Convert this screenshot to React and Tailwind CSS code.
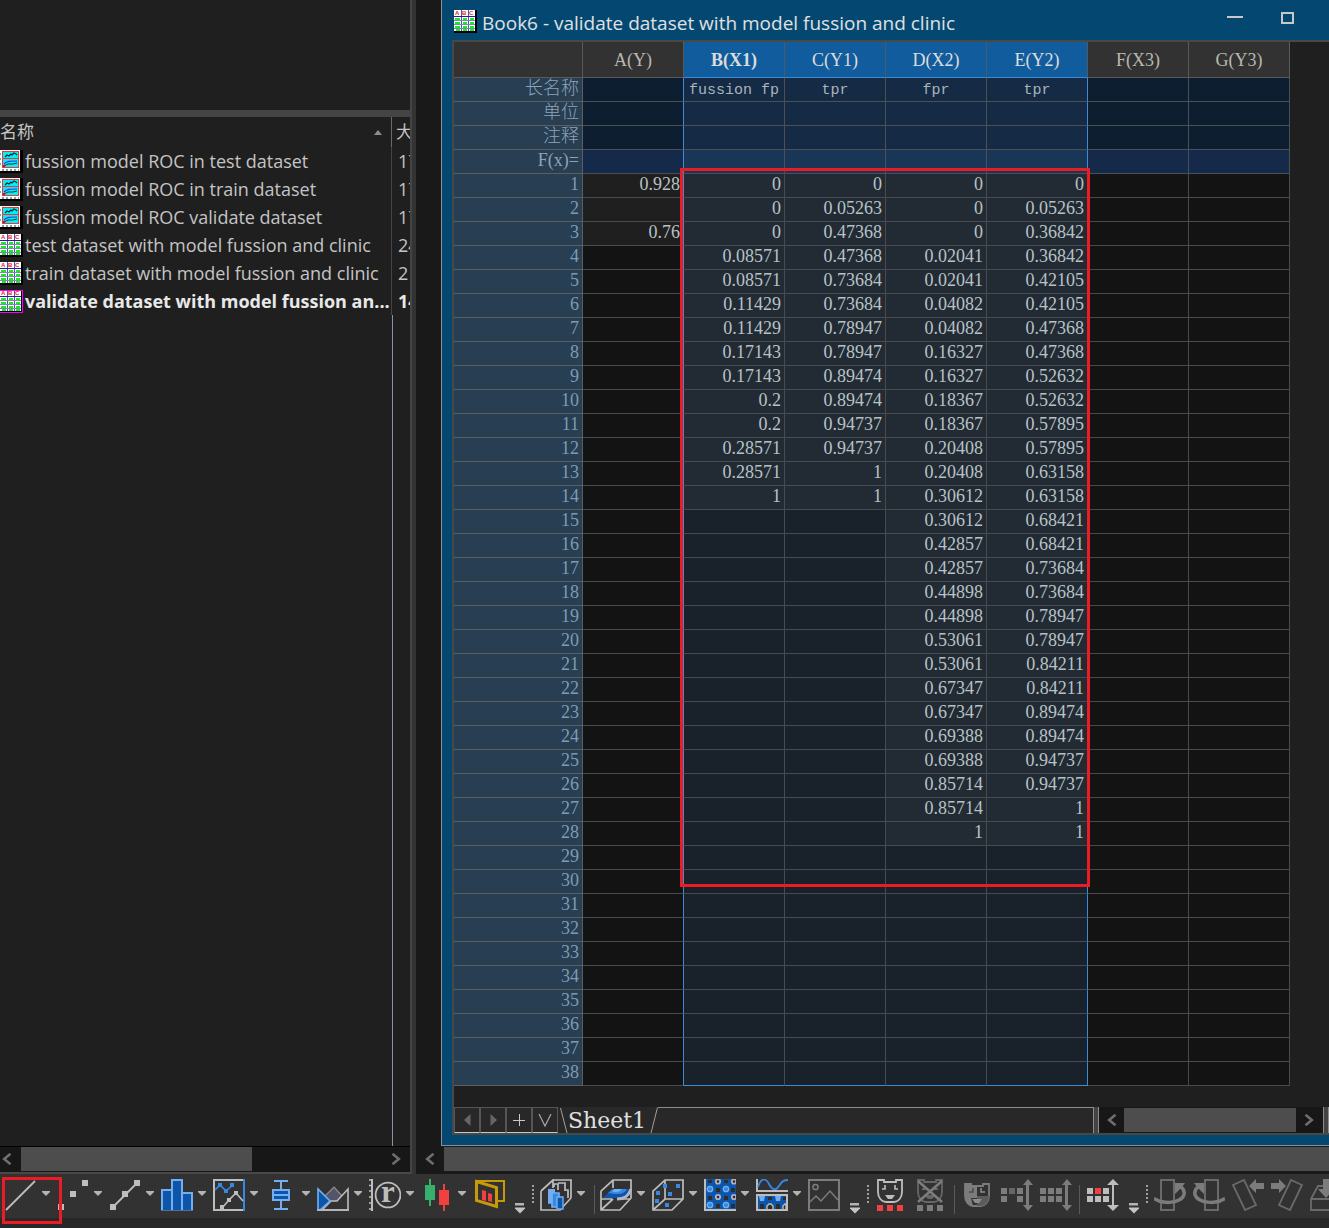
import React from "react";

const UI = "font-['Open_Sans','Noto_Sans_CJK_SC',sans-serif]";
const SHEET = "font-['Liberation_Serif','Noto_Sans_CJK_SC',serif]";

const files = [
  { kind: "graph", name: "fussion model ROC in test dataset", size: "17" },
  { kind: "graph", name: "fussion model ROC in train dataset", size: "17" },
  { kind: "graph", name: "fussion model ROC validate dataset", size: "17" },
  { kind: "book", name: "test dataset with model fussion and clinic", size: "24" },
  { kind: "book", name: "train dataset with model fussion and clinic", size: "2" },
  { kind: "book", name: "validate dataset with model fussion an...", size: "14", active: true },
];

const columns = ["A(Y)", "B(X1)", "C(Y1)", "D(X2)", "E(Y2)", "F(X3)", "G(Y3)"];
const labels = ["长名称", "单位", "注释", "F(x)="];
const longNames = ["", "fussion fp", "tpr", "fpr", "tpr", "", ""];

const data = {
  0: ["0.928", " ", "0.76"],
  1: ["0", "0", "0", "0.08571", "0.08571", "0.11429", "0.11429", "0.17143", "0.17143", "0.2", "0.2", "0.28571", "0.28571", "1"],
  2: ["0", "0.05263", "0.47368", "0.47368", "0.73684", "0.73684", "0.78947", "0.78947", "0.89474", "0.89474", "0.94737", "0.94737", "1", "1"],
  3: ["0", "0", "0", "0.02041", "0.02041", "0.04082", "0.04082", "0.16327", "0.16327", "0.18367", "0.18367", "0.20408", "0.20408", "0.30612", "0.30612", "0.42857", "0.42857", "0.44898", "0.44898", "0.53061", "0.53061", "0.67347", "0.67347", "0.69388", "0.69388", "0.85714", "0.85714", "1"],
  4: ["0", "0.05263", "0.36842", "0.36842", "0.42105", "0.42105", "0.47368", "0.47368", "0.52632", "0.52632", "0.57895", "0.57895", "0.63158", "0.63158", "0.68421", "0.68421", "0.73684", "0.73684", "0.78947", "0.78947", "0.84211", "0.84211", "0.89474", "0.89474", "0.94737", "0.94737", "1", "1"],
};
const rows = Array.from({ length: 38 }, (_, i) => i);
const isSelected = (c) => c >= 1 && c <= 4;

function BookIcon({ active }) {
  return (
    <svg width="23" height="23" viewBox="0 0 23 23" className="shrink-0" shapeRendering="crispEdges" aria-hidden="true">
      <rect width="23" height="23" fill="#000" />
      <rect width="21" height="21" fill="#fff" />
      <g fontFamily="Liberation Sans" fontWeight="700" fontSize="6" fill="#e8202c" shapeRendering="auto">
        <text x="1" y="5">A</text>
        <text x="8" y="5">B</text>
        <text x="15" y="5">C</text>
      </g>
      <path d="M7.5 0V21M14.5 0V21" stroke="#5a50b4" />
      <path d="M0 6.5H21M0 10.5H21M0 14.5H21M0 18.5H21" stroke="#7a8ab8" />
      <path d="M0 6.5H21" stroke="#2a1a9c" />
      <path d="M1 8.5H6M9 8.5H13M16 8.5H20M1 12.5H6M9 12.5H13M16 12.5H20M1 16.5H6M9 16.5H13M16 16.5H20M2 20H6M9 20H13M16 20H20" stroke="#20e820" strokeWidth="2" />
      {active && <path d="M0 .5H22.5V22.5H0" fill="none" stroke="#f0f" />}
    </svg>
  );
}

function GraphIcon() {
  return (
    <svg width="23" height="23" viewBox="0 0 23 23" className="shrink-0" shapeRendering="crispEdges" aria-hidden="true">
      <rect width="23" height="23" fill="#000" />
      <rect width="20" height="21" fill="#fff" />
      <path d="M2 19.5H19" stroke="#999" strokeWidth="2" strokeDasharray="2 2" />
      <path d="M.5 3V18" stroke="#999" strokeDasharray="2 3" />
      <rect x="2.5" y="1.5" width="16" height="16" fill="#00f0f8" stroke="#e83838" />
      <path d="M2 8.5H19" stroke="#e83838" />
      <g fill="none" shapeRendering="auto">
        <path d="M5 7l2-2 2 1 2-2 1 1 2-2 2 1 1 1" stroke="#102030" strokeWidth="1.2" />
        <path d="M4 14c3-3 6-3 13-3" stroke="#3030e0" strokeWidth="1.2" />
        <path d="M4 16l4-2h5l4-1" stroke="#103040" />
      </g>
      <rect x="3" y="15" width="2" height="2" fill="#e00020" />
    </svg>
  );
}

function Chevron({ dir }) {
  return (
    <svg width="10" height="12" viewBox="0 0 10 12" aria-hidden="true">
      <path d={dir === "left" ? "M8.5 .8L2.2 6l6.3 5.2" : "M1.5 .8L7.8 6l-6.3 5.2"} fill="none" stroke="#6e6e6e" strokeWidth="2.6" />
    </svg>
  );
}

const G = "#bdbdbd";
const D = "#7c7c7c";
const B = "#0d55a8";
const L = "#73aef0";
const K = "#3588e4";

const art = {
  line: <path d="M1 31L30 2" stroke={G} strokeWidth="1.8" />,
  scatter: <path d="M1 25h6v6h-6zM13 12h6v6h-6zM25 1h6v6h-6z" fill={G} />,
  lineSymbol: (
    <g fill={G}>
      <path d="M4 28L28 4" stroke={G} strokeWidth="1.8" />
      <path d="M1 25h6v6h-6zM13 12h6v6h-6zM25 1h6v6h-6z" />
    </g>
  ),
  column: (
    <g fill={B} stroke={L} strokeWidth="2">
      <path d="M1 31V11h10v20M21 31V14h10v17M11 31V1h10v30" />
      <path d="M0 32H32" strokeWidth="1" />
    </g>
  ),
  doubleY: (
    <g fill="none" strokeWidth="2">
      <path d="M31 1H1v30h30" stroke={G} />
      <path d="M31 0v32" stroke={K} />
      <path d="M2 11l5-5 6 6 7-6" stroke={K} strokeWidth="1.6" />
      <path d="M5 4h4v4H5zM11 10h4v4h-4zM17 4h4v4h-4z" fill={K} stroke="none" />
      <path d="M9 29l7-8 7-7 7 8" stroke={G} strokeWidth="1.6" />
      <path d="M7 26h4v4H7zM14 19h4v4h-4zM21 12h4v4h-4z" fill={G} stroke="none" />
    </g>
  ),
  box: (
    <g stroke={L} strokeWidth="2" fill={B}>
      <path d="M9 2h14M16 2v8M16 21v9M9 30h14" />
      <path d="M8 11h16v10H8zM8 16h16" />
    </g>
  ),
  area: (
    <g strokeWidth="1.6">
      <path d="M7 18l10-10 9 10-5 5H12z" fill="#55556a" stroke="#8d8d96" strokeWidth="1.2" />
      <path d="M5 31l9-9h6l11-12v21z" fill="#323232" stroke={G} />
      <path d="M1 10v21h2l10-9z" fill={B} stroke={L} />
      <path d="M0 31H32" stroke={G} />
    </g>
  ),
  polar: (
    <g fill="none" stroke={G}>
      <path d="M3 0v32" strokeWidth="2" />
      <path d="M0 1h3M0 6.5h3M0 12h3M0 18h3M0 24h3M0 30h3" strokeWidth="1.4" />
      <circle cx="19" cy="16" r="12.4" strokeWidth="1.8" />
      <text x="12" y="23" fontFamily="Liberation Serif" fontWeight="700" fontSize="31" fill={G} stroke="none">r</text>
    </g>
  ),
  candle: (
    <g>
      <path d="M4 6h10v15H4zM8 0h2v27H8z" fill="#36b06c" />
      <path d="M18 11h10v15H18zM22 5h2v27h-2z" fill="#f24040" />
    </g>
  ),
  template: (
    <g fill="none" stroke="#c89a08" strokeWidth="2">
      <path d="M3 2h28v20h-7" />
      <path d="M3.500 2.500l20 6v19l-20-6z" strokeWidth="3" />
      <path d="M9 11l4 1v10l-4-1zM15 14l4 1v8l-4-1z" fill="#f24040" stroke="none" />
    </g>
  ),
  bars3d: (
    <g fill="none" stroke={G} strokeWidth="1.7">
      <path d="M13 1h18v18M1 12L13 1v8M1 12v19h19l11-12" />
      <path d="M14 8V5h4v6M20 4h5v8M18 4h2M25 11h3v8" />
      <path d="M8 10h7v14l-7 1z" fill={L} stroke="none" />
      <path d="M12 14h7v14h-7z" fill={K} stroke={L} />
      <path d="M17 18h6v12h-6z" fill={B} stroke={L} strokeWidth="1.4" />
    </g>
  ),
  surface: (
    <g fill="none" stroke={G} strokeWidth="1.7">
      <path d="M13 1h18v18L20 31H1V12zM13 1v8M1 20h11M20 20h11M1 31l12-11" />
      <path d="M3 19l9-9h19c-2 7-6 9-12 9z" fill={B} stroke="none" />
      <path d="M8 14l5-4h14c-3 5-7 5-12 5z" fill={K} stroke="none" />
      <path d="M12 12l3-2h7c-2 3-5 3-8 3z" fill={L} stroke="none" />
      <path d="M31 10c-3 8-7 10-14 10" stroke="#b4b4c4" strokeWidth="3" />
    </g>
  ),
  scatter3d: (
    <g fill="none" stroke={G} strokeWidth="1.7">
      <path d="M13 1h18v19L20 31H1V12zM13 1v19M1 31l12-11h18" />
      <path d="M11 5h4v4h-4zM24 5h4v4h-4zM4 12h4v4H4zM16 13h4v4h-4zM3 20h4v4H3zM13 24h4v4h-4z" fill={K} stroke="none" />
    </g>
  ),
  contour: (
    <g>
      <path d="M0 0H32V32H0z" fill={B} />
      <path d="M1 0v31h31" stroke={G} strokeWidth="2" fill="none" />
      <path d="M4 1h4v3H4zM20 1h4v3h-4zM12 9h4v4h-4zM27 9h4v4h-4zM4 17h4v4H4zM20 17h4v4h-4zM12 25h4v4h-4zM27 25h4v4h-4z" fill="#2d2d2d" />
      <g fill={K} stroke={L} strokeWidth="1.3">
        <circle cx="6" cy="10" r="2.7" /><circle cx="22" cy="10" r="2.7" />
        <circle cx="6" cy="26" r="2.7" /><circle cx="22" cy="26" r="2.7" />
      </g>
      <g fill="#2d2d2d" stroke="#b0b0c0" strokeWidth="1.8">
        <circle cx="14" cy="2.5" r="2.2" /><circle cx="30" cy="2.5" r="2.2" />
        <circle cx="14" cy="18" r="2.2" /><circle cx="30" cy="18" r="2.2" />
      </g>
    </g>
  ),
  profile: (
    <g>
      <path d="M1 0v12h31" stroke={G} strokeWidth="2" fill="none" />
      <path d="M2 8C5-2 10-1 13 5s7 7 10 2 5-6 9-6" stroke={K} strokeWidth="1.8" fill="none" />
      <path d="M1 16h30v15H1z" fill={B} stroke={G} strokeWidth="2" />
      <path d="M12 18h4v3h-4zM27 18h3v3h-3zM4 25h4v5H4zM20 25h4v5h-4z" fill="#2d2d2d" />
      <path d="M3 17h6l-1 5H4zM19 17h6l-1 5h-4z" fill={L} />
      <path d="M11 30v-3l2-2h2l2 2v3M27 30v-3l2-2h1v5" fill="#2d2d2d" stroke={G} strokeWidth="1.4" />
    </g>
  ),
  image: (
    <g fill="none" stroke={D} strokeWidth="2">
      <path d="M1 1h30v30H1z" />
      <circle cx="7.5" cy="8" r="2.6" strokeWidth="1.5" />
      <path d="M2 23l6-6 5 5 9-10 8 9" strokeWidth="1.5" />
    </g>
  ),
  mask: (
    <g fill="none" stroke={G} strokeWidth="1.8">
      <path d="M3 1h6v2h12V1h6v12c0 6-4 10-8 10h-8c-4 0-8-4-8-10z" />
      <path d="M7 10h3V6M23 10h-3V6" strokeWidth="1.6" />
      <path d="M10 16h10l-3 4h-4z" fill={G} stroke="none" />
      <path d="M2 26h6v6H2zM12 26h6v6h-6zM22 26h6v6h-6z" fill="#f24040" stroke="none" />
    </g>
  ),
  unmask: (
    <g fill="none" stroke="#666" strokeWidth="1.8">
      <path d="M3 1h6v2h12V1h6v12c0 6-4 10-8 10h-8c-4 0-8-4-8-10z" />
      <path d="M7 10h4M19 10h4" />
      <path d="M9 16h12l-4 4h-4z" fill="#666" stroke="none" />
      <path d="M3 2l24 21M27 2L3 23" stroke={D} strokeWidth="2.6" />
      <path d="M2 26h6v6H2zM12 26h6v6h-6zM22 26h6v6h-6z" fill={D} stroke="none" />
    </g>
  ),
  maskSwap: (
    <g fill="none" stroke={D} strokeWidth="1.8">
      <path d="M3 5h6v2h12V5h6v12c0 6-4 10-8 10h-8c-4 0-8-4-8-10z" />
      <path d="M3 5h6v2h6v12H9l2 8c-4 0-8-4-8-10z" fill={D} stroke="none" />
      <path d="M15 17h12c0 6-4 10-8 10h-4z" fill="#5c5c5c" stroke="none" />
      <path d="M7 13h4V9" stroke="#4c4c4c" strokeWidth="1.5" />
      <path d="M23 13h-4V9" stroke="#8c8c8c" strokeWidth="1.5" />
      <path d="M10 20h10l-3 4h-4z" fill="#8c8c8c" stroke="none" />
    </g>
  ),
  moveA: (
    <g fill={D}>
      <path d="M0 9h6v6H0zM16 9h6v6h-6zM0 17h6v6H0zM16 17h6v6h-6z" />
      <path d="M8 9h6v6H8z" fill="#666" />
      <path d="M27 0l5 6h-4v20h4l-5 6-5-6h3V6h-3z" />
    </g>
  ),
  moveB: (
    <g fill={D}>
      <path d="M0 9h6v6H0zM8 9h6v6H8zM16 9h6v6h-6zM0 17h6v6H0zM8 17h6v6H8zM16 17h6v6h-6z" />
      <path d="M27 0l5 6h-4v20h4l-5 6-5-6h3V6h-3z" />
    </g>
  ),
  moveC: (
    <g fill={G}>
      <path d="M0 9h6v6H0zM16 9h6v6h-6zM0 17h6v6H0zM8 17h6v6H8zM16 17h6v6h-6z" />
      <path d="M8 9h6v6H8z" fill="#f24040" />
      <path d="M26 0l6 6h-5v20h5l-6 6-6-6h5V6h-5z" />
    </g>
  ),
  rotateA: (
    <g fill="none" stroke="#6a6a6a" strokeWidth="2">
      <path d="M7 1h13v30H7z" />
      <path d="M0 19.500l5 2.500c6 2 15 2 20-1 6-3 7-9 2-13" stroke={D} strokeWidth="3.500" />
      <path d="M21 4h10l-3 4-3 3-4 4z" fill={D} stroke="none" />
    </g>
  ),
  rotateB: (
    <g fill="none" stroke="#6a6a6a" strokeWidth="2">
      <path d="M12 1h13v30H12z" />
      <path d="M32 19.500l-5 2.500c-6 2-15 2-20-1-6-3-7-9-2-13" stroke={D} strokeWidth="3.500" />
      <path d="M11 4H1l3 4 3 3 4 4z" fill={D} stroke="none" />
    </g>
  ),
  tiltA: (
    <g fill="none" stroke="#6a6a6a" strokeWidth="1.8">
      <path d="M1 6l11-5 12 25-11 5z" />
      <path d="M17 7l7-7v4h8v6h-8v4z" fill={D} stroke="none" />
    </g>
  ),
  tiltB: (
    <g fill="none" stroke="#6a6a6a" strokeWidth="1.8">
      <path d="M31 6L20 1 8 26l11 5z" />
      <path d="M15 7L8 0v4H0v6h8v4z" fill={D} stroke="none" />
    </g>
  ),
  flatten: (
    <g fill="none" stroke="#6a6a6a" strokeWidth="1.8">
      <path d="M1 20h31v11H1zM1 20L8 7h6" />
      <path d="M13 0h6v10h5l-8 9-8-9h5z" fill={D} stroke="none" />
    </g>
  ),
};

function Tool({ icon, label, menu }) {
  return (
    <button type="button" aria-label={label} className={menu ? "flex w-[52px] shrink-0" : "flex w-8 shrink-0"}>
      <svg width="32" height="32" viewBox="0 0 32 32" className="shrink-0" aria-hidden="true">{art[icon]}</svg>
      {menu && (
        <svg width="18" height="32" viewBox="0 0 18 32" className="shrink-0" aria-hidden="true">
          <path d="M5 12h8v1l-4 4-4-4z" fill="#b4b4b4" />
        </svg>
      )}
    </button>
  );
}

function BarEnd() {
  return (
    <div className="flex w-[35px] shrink-0 pl-2">
      <button type="button" aria-label="More tools" className="w-4">
        <svg width="16" height="38" viewBox="0 0 16 38" aria-hidden="true">
          <path d="M2 24h9v2.500H2z" fill="#b4b4b4" />
          <path d="M2 28.500h10v1l-5 5-5-5z" fill="#c4c4c4" />
        </svg>
      </button>
      <div className="mt-1.5 ml-[3px] h-[18px] border-l-2 border-dotted border-[#a0a0a0]" />
    </div>
  );
}

const Divider = ({ wide }) => (
  <div className={wide ? "flex w-[15px] shrink-0 pl-[7px]" : "flex w-2 shrink-0 pl-0.5"}>
    <div className="mt-1.5 h-[29px] w-px bg-[#5a5a5a]" />
  </div>
);

function FilePanel() {
  return (
    <aside className={`flex w-[412px] shrink-0 flex-col border-r-2 border-[#444] bg-[#1f1f1f] ${UI}`}>
      <div className="h-[110px]" />
      <div className="h-[7px] bg-[#444]" />
      <table className="w-full table-fixed border-separate border-spacing-0 text-lg text-[#c4c4c4]">
        <colgroup>
          <col className="w-[392px]" />
          <col />
        </colgroup>
        <thead>
          <tr className="h-[30px] text-left text-[17px] leading-[30px]">
            <th className="border-r border-[#6a6a6a] p-0 font-normal">
              <button type="button" className="flex w-full items-center justify-between pr-[9px]">
                名称
                <svg width="8" height="5" viewBox="0 0 8 5" aria-hidden="true"><path d="M4 0l4 5H0z" fill="#8c8c8c" /></svg>
              </button>
            </th>
            <th className="overflow-hidden p-0 pl-1 font-normal whitespace-nowrap">大小</th>
          </tr>
        </thead>
        <tbody>
          {files.map((f) => (
            <tr key={f.name} className={f.active ? "h-7 font-bold text-[#e8e8e8]" : "h-7"}>
              <td className="border-r border-[#444] p-0 leading-7">
                <div className="flex items-center gap-[2px] whitespace-nowrap">
                  {f.kind === "book" ? <BookIcon active={f.active} /> : <GraphIcon />}
                  <span>{f.name}</span>
                </div>
              </td>
              <td className="overflow-hidden p-0 pl-1.5 leading-7 whitespace-nowrap">{f.size}</td>
            </tr>
          ))}
        </tbody>
      </table>
      <div className="ml-[392px] flex-1 border-l border-[#8a93a8]" />
      <div className="flex h-[26px] items-start border-t border-b-0 border-black bg-[#171717]">
        <button type="button" aria-label="Scroll left" className="flex h-6 w-[21px] items-center pl-0.5"><Chevron dir="left" /></button>
        <div className="h-6 w-[231px] bg-[#4d4d4d]" />
        <button type="button" aria-label="Scroll right" className="ml-auto flex h-6 items-center pr-[9px]"><Chevron dir="right" /></button>
      </div>
      <div className="h-0.5 bg-[#484848]" />
    </aside>
  );
}

function Sheet() {
  return (
    <div className="relative w-[836px]">
      <table className={`w-[836px] table-fixed border-separate border-spacing-0 text-lg leading-5 ${SHEET}`}>
        <colgroup>
          <col className="w-[129px]" />
          {columns.map((c) => <col key={c} className="w-[101px]" />)}
        </colgroup>
        <thead>
          <tr className="h-9">
            <th className="border-r border-b border-[#5a5a5a] bg-[#323232] p-0" />
            {columns.map((c, i) => (
              <th
                key={c}
                scope="col"
                className={`border-r border-b p-0 ${isSelected(i) ? "border-r-[#4a5a68] border-b-[#3d8bd6] bg-[#115c9c] text-[#dcdcdc]" : "border-[#5a5a5a] bg-[#323232] text-[#b8b8b0]"} ${i === 1 ? "font-bold" : "font-normal"}`}
              >
                {c}
              </th>
            ))}
          </tr>
        </thead>
        <tbody>
          {labels.map((label, r) => (
            <tr key={label} className="h-6">
              <th scope="row" className="border-r border-b border-[#5c5f60] bg-[#273e53] p-0 pr-[3px] text-right align-top font-light text-[#8fa3b3]">{label}</th>
              {columns.map((c, i) => (
                <td
                  key={c}
                  className={`overflow-hidden border-r border-b border-[#4a5054] p-0 text-center align-bottom font-['Liberation_Mono',monospace] text-[15px] whitespace-nowrap text-[#a8b4bc] ${
                    isSelected(i) ? (r === 3 ? "bg-[#1a3656]" : "bg-[#152a44]") : r === 3 ? "bg-[#152a4a]" : "bg-[#0d1e30]"
                  } ${i === 0 || i === 4 ? "border-r-[#3d8bd6]" : ""}`}
                >
                  {r === 0 ? longNames[i] : ""}
                </td>
              ))}
            </tr>
          ))}
          {rows.map((r) => (
            <tr key={r} className="h-6">
              <th scope="row" className="border-r border-b border-[#5c5f60] bg-[#273e53] p-0 pr-[3px] text-right align-top font-normal text-[#7f9bb0]">{r + 1}</th>
              {columns.map((c, i) => {
                const v = data[i]?.[r];
                return (
                  <td
                    key={c}
                    className={`border-r border-b border-[#464b50] p-0 pr-[3px] text-right align-top text-[#b8c2c6] ${
                      isSelected(i) ? (v ? "bg-[#222b33]" : "bg-[#19222b]") : v ? "bg-[#1f1f1f]" : "bg-[#131313]"
                    } ${i === 0 || i === 4 ? "border-r-[#3d8bd6]" : ""} ${r === 37 && isSelected(i) ? "border-b-[#3d8bd6]" : ""}`}
                  >
                    {v}
                  </td>
                );
              })}
            </tr>
          ))}
        </tbody>
      </table>
      <div className="absolute top-[126px] left-[226px] h-[719px] w-[410px] border-3 border-[#ed1c24]" />
    </div>
  );
}

function TabBar() {
  const nav = "flex h-[26px] w-[26px] items-center justify-center border border-[#555] border-b-[#c8c8c8]";
  return (
    <div className="flex h-[26px] bg-[#282828]">
      <div className="flex min-w-0 flex-1 border-r border-[#8c8c8c]">
        <button type="button" aria-label="Previous sheet" className={nav}>
          <svg width="7" height="12" viewBox="0 0 7 12"><path d="M6.500 0v12L0 6z" fill="#666" /></svg>
        </button>
        <button type="button" aria-label="Next sheet" className={nav}>
          <svg width="7" height="12" viewBox="0 0 7 12"><path d="M.5 0v12L7 6z" fill="#666" /></svg>
        </button>
        <button type="button" aria-label="Add sheet" className={nav}>
          <svg width="12" height="12" viewBox="0 0 12 12"><path d="M0 6.500h12M6.500 0v12" stroke="#c8c8c8" /></svg>
        </button>
        <button type="button" aria-label="Sheet list" className={nav}>
          <svg width="14" height="13" viewBox="0 0 14 13"><path d="M1 0l6 12 6-12" fill="none" stroke="#a8a8a8" strokeWidth="1.200" /></svg>
        </button>
        <button type="button" className="flex items-start pl-0.5 font-['DejaVu_Serif',serif] text-[22px] leading-7 text-[#e0e0e0]">
          <svg width="8" height="26" viewBox="0 0 8 26"><path d="M.5 1l6.500 25" stroke="#a0a0a0" /></svg>
          <span>Sheet1</span>
          <svg width="12" height="26" viewBox="0 0 12 26"><path d="M5 26L11.500 .5" stroke="#a0a0a0" /></svg>
        </button>
        <div className="flex-1 border-t border-[#8c8c8c]" />
      </div>
      <div className="w-1 bg-[#444]" />
      <div className="flex w-[226px] items-center border-x border-[#8c8c8c] bg-[#171717]">
        <button type="button" aria-label="Scroll sheet left" className="flex w-[25px] items-center pl-2"><Chevron dir="left" /></button>
        <div className="h-6 flex-1 bg-[#4d4d4d]" />
        <button type="button" aria-label="Scroll sheet right" className="flex w-[27px] items-center pl-2"><Chevron dir="right" /></button>
      </div>
      <div className="w-[5px] border-r border-[#8c8c8c] bg-[#444]" />
    </div>
  );
}

function BookWindow() {
  return (
    <section className="border-b border-l border-[#8a8f94] bg-[#044872] pb-2.5 pl-2.5">
      <header className={`flex h-10 items-center text-[19px] text-[#e0e0e0] ${UI}`}>
        <span className="mt-0.5 ml-0.5"><BookIcon /></span>
        <h1 className="mt-[7px] ml-[5px] whitespace-nowrap">Book6 - validate dataset with model fussion and clinic</h1>
        <button type="button" aria-label="Minimize" className="mr-[38px] mb-[5px] ml-auto">
          <svg width="16" height="13" viewBox="0 0 16 13"><path d="M0 6h16" stroke="#c8c8c8" strokeWidth="2" /></svg>
        </button>
        <button type="button" aria-label="Maximize" className="mr-[35px] mb-[5px]">
          <svg width="13" height="12" viewBox="0 0 13 12"><path d="M1 1h11v10H1z" fill="none" stroke="#c8c8c8" strokeWidth="2" /></svg>
        </button>
      </header>
      <div className="border-y-2 border-l-2 border-[#484848] bg-[#1f1f1f]">
        <div className="overflow-hidden pb-[21px]">
          <Sheet />
        </div>
        <TabBar />
      </div>
    </section>
  );
}

export default function App() {
  return (
    <div className="flex min-h-screen flex-col overflow-hidden bg-[#282828]">
      <main className="flex">
        <FilePanel />
        <div className="w-1 bg-[#333]" />
        <div className="flex min-w-0 flex-1 flex-col bg-[#191919]">
          <div className="flex-1 pb-px pl-[25px]">
            <BookWindow />
          </div>
          <div className="flex h-[27px] items-start">
            <button type="button" aria-label="Scroll workspace left" className="flex h-6 w-7 items-center pl-[9px]"><Chevron dir="left" /></button>
            <div className="h-6 flex-1 bg-[#4d4d4d]" />
          </div>
        </div>
      </main>
      <div role="toolbar" className="relative flex h-11 items-start bg-[#323232] pt-[5px] pl-[5px]">
        <Tool icon="line" label="Line" menu />
        <Tool icon="scatter" label="Scatter" menu />
        <Tool icon="lineSymbol" label="Line and symbol" menu />
        <Tool icon="column" label="Column" menu />
        <Tool icon="doubleY" label="Double Y" menu />
        <Tool icon="box" label="Box chart" menu />
        <Tool icon="area" label="Area" menu />
        <Tool icon="polar" label="Polar" menu />
        <Tool icon="candle" label="Stock" menu />
        <Tool icon="template" label="Template library" />
        <BarEnd />
        <Tool icon="bars3d" label="3D bars" menu />
        <Divider />
        <Tool icon="surface" label="3D surface" menu />
        <Tool icon="scatter3d" label="3D scatter" menu />
        <Tool icon="contour" label="Contour" menu />
        <Tool icon="profile" label="Profile" menu />
        <Tool icon="image" label="Image plot" />
        <BarEnd />
        <div className="flex shrink-0 gap-2">
          <Tool icon="mask" label="Mask points" />
          <Tool icon="unmask" label="Unmask points" />
        </div>
        <Divider wide />
        <div className="flex shrink-0 gap-[7px]">
          <Tool icon="maskSwap" label="Swap mask" />
          <Tool icon="moveA" label="Hide masked points" />
          <Tool icon="moveB" label="Show masked points" />
        </div>
        <Divider wide />
        <Tool icon="moveC" label="Mask color" />
        <BarEnd />
        <div className="flex gap-[7px]">
          <Tool icon="rotateA" label="Rotate clockwise" />
          <Tool icon="rotateB" label="Rotate counterclockwise" />
          <Tool icon="tiltA" label="Tilt left" />
          <Tool icon="tiltB" label="Tilt right" />
          <Tool icon="flatten" label="Flatten" />
        </div>
        <div className="absolute top-[3px] left-0.5 h-[47px] w-[60px] border-3 border-[#ed1c24]" />
      </div>
    </div>
  );
}
